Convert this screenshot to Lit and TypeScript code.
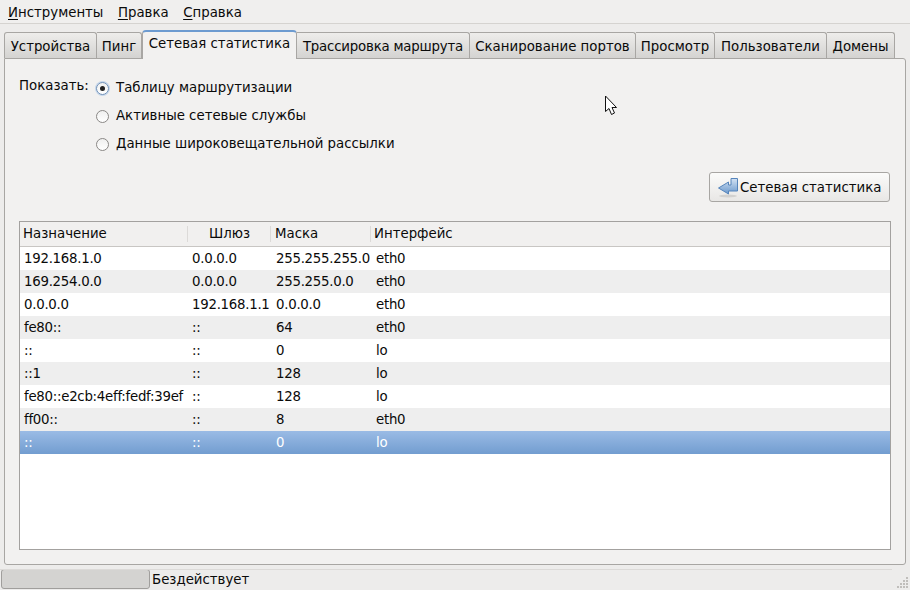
import { LitElement, css, html, svg } from "lit";
import { customElement } from "lit/decorators.js";
import { classMap } from "lit/directives/class-map.js";

const TABS = [
  { label: "Устройства", width: 93 },
  { label: "Пинг", width: 45 },
  { label: "Сетевая статистика", width: 155, active: true },
  { label: "Трассировка маршрута", width: 173, tight: true },
  { label: "Сканирование портов", width: 166 },
  { label: "Просмотр", width: 79 },
  { label: "Пользователи", width: 112 },
  { label: "Домены", width: 68 },
];

const ROWS = [
  ["192.168.1.0", "0.0.0.0", "255.255.255.0", "eth0"],
  ["169.254.0.0", "0.0.0.0", "255.255.0.0", "eth0"],
  ["0.0.0.0", "192.168.1.1", "0.0.0.0", "eth0"],
  ["fe80::", "::", "64", "eth0"],
  ["::", "::", "0", "lo"],
  ["::1", "::", "128", "lo"],
  ["fe80::e2cb:4eff:fedf:39ef", "::", "128", "lo"],
  ["ff00::", "::", "8", "eth0"],
  ["::", "::", "0", "lo"],
];

const OPTIONS = [
  "Таблицу маршрутизации",
  "Активные сетевые службы",
  "Данные широковещательной рассылки",
];

const jumpIcon = svg`<svg class="jump" width="23" height="22" viewBox="0 0 23 22">
  <defs>
    <linearGradient id="jump" x1="0" y1="0" x2="0" y2="1">
      <stop offset="0" stop-color="#d3e2f3" />
      <stop offset="1" stop-color="#6a98cc" />
    </linearGradient>
  </defs>
  <ellipse cx="10" cy="20" rx="9" ry="1.5" fill="#d2d1cf" />
  <path d="M0.5 12 L10.5 6 V9 H13 V2.5 H19.5 V15 H10.5 V18 Z"
    fill="url(#jump)" stroke="#5584bb" stroke-linejoin="round" />
</svg>`;

const cursorIcon = svg`<svg width="14" height="21" viewBox="0 0 14 21">
  <path d="M1.5 1 V16.5 L5 13.5 L7.5 19.5 L10.5 18 L8 12.5 H12.5 Z"
    fill="#fff" stroke="#111" stroke-linejoin="round" />
</svg>`;

@customElement("app-root")
export class AppRoot extends LitElement {
  static styles = css`
    :host {
      display: flex;
      flex-direction: column;
      position: relative;
      width: 910px;
      height: 590px;
      overflow: hidden;
      background: #edeceb;
      color: #0a0a0a;
      font: 13.33px "DejaVu Sans", sans-serif;
    }

    .menubar {
      display: flex;
      gap: 14.5px;
      height: 24px;
      padding: 4px 0 0 8px;
      box-sizing: border-box;
      background: #f0efee;
      border-bottom: 1px solid #d5d3d0;
      line-height: 17px;
    }
    .menubar u {
      text-underline-offset: 2px;
    }

    .tabs {
      display: flex;
      align-items: flex-end;
      height: 34px;
      padding-left: 4px;
    }
    .tab {
      height: 26px;
      box-sizing: border-box;
      border: 1px solid #a8a6a3;
      border-bottom: none;
      border-left-width: 0;
      border-radius: 0 3px 0 0;
      background: linear-gradient(#eeedeb, #d4d3d1);
      text-align: center;
      line-height: 27px;
      white-space: nowrap;
    }
    .tab:first-child {
      border-left-width: 1px;
      border-radius: 3px 3px 0 0;
    }
    .tab.tight {
      letter-spacing: -0.2px;
    }
    .tab.active {
      position: relative;
      height: 29px;
      z-index: 1;
      margin-bottom: -1px;
      border: 1px solid #a8a6a3;
      border-top: 2px solid #6d9bd0;
      border-bottom: none;
      border-radius: 4px 4px 0 0;
      background: #f2f1f0;
      line-height: 24px;
    }

    .panel {
      display: flex;
      flex-direction: column;
      height: 507px;
      margin: 0 4px;
      padding: 18px 14px 13px 14px;
      box-sizing: border-box;
      border: 1px solid #a8a6a3;
      border-radius: 0 3px 3px 3px;
      background: #f2f1f0;
    }

    .show {
      display: flex;
    }
    .show-label {
      width: 77px;
      line-height: 18px;
    }
    .options {
      display: flex;
      flex-direction: column;
      gap: 10px;
      line-height: 18px;
      padding-top: 2px;
    }
    .option {
      display: flex;
      align-items: center;
      gap: 7px;
    }
    .radio {
      width: 11px;
      height: 11px;
      border: 1px solid #8a8886;
      border-radius: 50%;
      display: flex;
      align-items: center;
      justify-content: center;
      background: linear-gradient(#f0f0ef, #fff);
    }
    .radio.on {
      border-color: #6d8fb8;
      box-shadow: 0 0 0 1px #c5d6ea;
    }
    .radio.on::after {
      content: "";
      width: 5px;
      height: 5px;
      border-radius: 50%;
      background: #222;
    }

    .actions {
      display: flex;
      justify-content: flex-end;
      margin-top: 19px;
      padding-right: 1px;
    }
    .button {
      display: flex;
      align-items: center;
      width: 181px;
      height: 30px;
      box-sizing: border-box;
      padding-left: 8px;
      border: 1px solid #a8a6a3;
      border-radius: 3px;
      background: linear-gradient(#fbfbfa, #e8e7e5);
      white-space: nowrap;
    }
    .jump {
      margin-right: -1px;
    }

    .table {
      display: flex;
      flex-direction: column;
      height: 329px;
      margin-top: 19px;
      box-sizing: border-box;
      border: 1px solid #a3a19f;
      background: #fff;
    }
    .head,
    .row {
      display: grid;
      grid-template-columns: 167px 83px 100px 1fr;
    }
    .head {
      height: 25px;
      align-items: center;
      box-sizing: border-box;
      border-bottom: 1px solid #c8c6c3;
      background: #f1f0ef;
    }
    .head span {
      height: 16px;
      padding-left: 3px;
      line-height: 16px;
      border-left: 1px solid #dcdad8;
    }
    .head span:first-child {
      border-left: none;
    }
    .head .gw {
      padding-left: 1px;
      text-align: center;
    }
    .head .mask {
      padding-left: 4px;
    }
    .row {
      height: 23px;
      line-height: 23px;
      letter-spacing: -0.27px;
    }
    .row:nth-child(even) {
      background: #eeeeee;
    }
    .row span {
      padding-left: 5px;
      white-space: nowrap;
    }
    .row span:first-child {
      padding-left: 4px;
    }
    .row span:nth-child(n + 3) {
      padding-left: 6px;
    }
    .row.selected {
      background: linear-gradient(#9abbe5, #729dd0);
      color: #fff;
    }

    .status {
      display: flex;
      flex: 1;
      align-items: center;
      position: relative;
      padding: 4px 0 1px 1px;
      gap: 2px;
    }
    .progress {
      width: 149px;
      height: 20px;
      box-sizing: border-box;
      border: 1px solid #a09e9c;
      border-radius: 3px;
      background: #d4d3d1;
    }
    .status-rule {
      position: absolute;
      top: 4px;
      left: 0;
      width: 892px;
      height: 1px;
      background: #dcdad8;
    }
    .grip {
      position: absolute;
      right: 1px;
      bottom: 1px;
    }

    .cursor {
      position: absolute;
      left: 604px;
      top: 95px;
      line-height: 0;
    }
  `;

  render() {
    return html`
      <div class="menubar">
        <span><u>И</u>нструменты</span>
        <span><u>П</u>равка</span>
        <span><u>С</u>правка</span>
      </div>
      <div class="tabs">
        ${TABS.map(
          (t) => html`<div
            class=${classMap({ tab: true, active: !!t.active, tight: !!t.tight })}
            style="width:${t.width}px"
          >
            ${t.label}
          </div>`
        )}
      </div>
      <div class="panel">
        <div class="show">
          <div class="show-label">Показать:</div>
          <div class="options">
            ${OPTIONS.map(
              (o, i) => html`<div class="option">
                <span class=${classMap({ radio: true, on: i === 0 })}></span>
                <span>${o}</span>
              </div>`
            )}
          </div>
        </div>
        <div class="actions">
          <div class="button">${jumpIcon}<span>Сетевая статистика</span></div>
        </div>
        <div class="table">
          <div class="head">
            <span>Назначение</span>
            <span class="gw">Шлюз</span>
            <span class="mask">Маска</span>
            <span>Интерфейс</span>
          </div>
          <div>
            ${ROWS.map(
              (r, i) => html`<div
                class=${classMap({ row: true, selected: i === ROWS.length - 1 })}
              >
                ${r.map((c) => html`<span>${c}</span>`)}
              </div>`
            )}
          </div>
        </div>
      </div>
      <div class="status">
        <div class="status-rule"></div>
        <div class="progress"></div>
        <span>Бездействует</span>
        <svg class="grip" width="12" height="12" viewBox="0 0 12 12" fill="#c0bebb">
          <rect x="9" y="0" width="2" height="2" />
          <rect x="6" y="3" width="2" height="2" />
          <rect x="9" y="3" width="2" height="2" />
          <rect x="3" y="6" width="2" height="2" />
          <rect x="6" y="6" width="2" height="2" />
          <rect x="9" y="6" width="2" height="2" />
          <rect x="0" y="9" width="2" height="2" />
          <rect x="3" y="9" width="2" height="2" />
          <rect x="6" y="9" width="2" height="2" />
          <rect x="9" y="9" width="2" height="2" />
        </svg>
      </div>
      <div class="cursor">${cursorIcon}</div>
    `;
  }
}
